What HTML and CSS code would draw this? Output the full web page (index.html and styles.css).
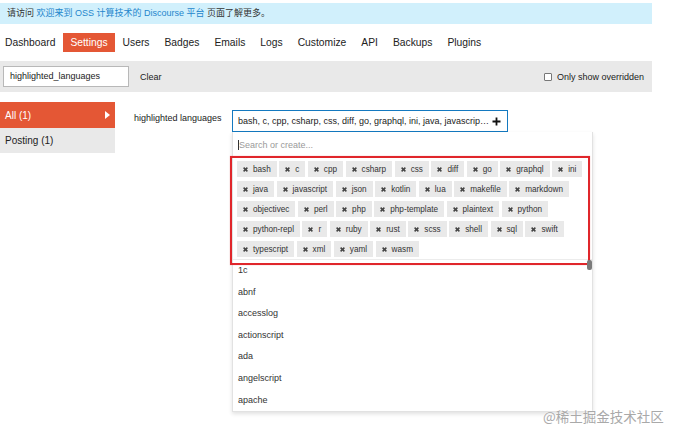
FILE: index.html
```html
<!DOCTYPE html>
<html lang="zh">
<head>
<meta charset="utf-8">
<title>Settings</title>
<link rel="stylesheet" href="styles.css">
</head>
<body>
<div class="page">
  <div class="banner">请访问 <a class="banner-link">欢迎来到 OSS 计算技术的 Discourse 平台</a> 页面了解更多。</div>

  <nav class="nav">
    <a class="nav-item first">Dashboard</a>
    <a class="nav-item active">Settings</a>
    <a class="nav-item">Users</a>
    <a class="nav-item">Badges</a>
    <a class="nav-item">Emails</a>
    <a class="nav-item">Logs</a>
    <a class="nav-item">Customize</a>
    <a class="nav-item">API</a>
    <a class="nav-item">Backups</a>
    <a class="nav-item">Plugins</a>
  </nav>

  <div class="filter">
    <div class="filter-input">highlighted_languages</div>
    <span class="clear">Clear</span>
    <label class="overridden"><span class="checkbox"></span>Only show overridden</label>
  </div>

  <div class="main">
    <aside class="sidebar">
      <div class="cat active">All (1)<span class="tri"></span></div>
      <div class="cat">Posting (1)</div>
    </aside>

    <section class="setting">
      <div class="setting-label">highlighted languages</div>
      <div class="control">
        <div class="select">
          <span class="select-text">bash, c, cpp, csharp, css, diff, go, graphql, ini, java, javascrip…</span>
          <svg class="plus" width="9" height="9" viewBox="0 0 9 9"><path d="M4.5 0.5v8M0.5 4.5h8" stroke="#111" stroke-width="1.8" fill="none"/></svg>
        </div>
        <div class="dropdown">
          <div class="search"><span class="caret"></span><span class="placeholder">Search or create...</span></div>
          <div class="chips">
            <span class="chip"><svg class="x" viewBox="0 0 5 5"><path d="M0.6 0.6L4.4 4.4M4.4 0.6L0.6 4.4"/></svg>bash</span>
            <span class="chip"><svg class="x" viewBox="0 0 5 5"><path d="M0.6 0.6L4.4 4.4M4.4 0.6L0.6 4.4"/></svg>c</span>
            <span class="chip"><svg class="x" viewBox="0 0 5 5"><path d="M0.6 0.6L4.4 4.4M4.4 0.6L0.6 4.4"/></svg>cpp</span>
            <span class="chip"><svg class="x" viewBox="0 0 5 5"><path d="M0.6 0.6L4.4 4.4M4.4 0.6L0.6 4.4"/></svg>csharp</span>
            <span class="chip"><svg class="x" viewBox="0 0 5 5"><path d="M0.6 0.6L4.4 4.4M4.4 0.6L0.6 4.4"/></svg>css</span>
            <span class="chip"><svg class="x" viewBox="0 0 5 5"><path d="M0.6 0.6L4.4 4.4M4.4 0.6L0.6 4.4"/></svg>diff</span>
            <span class="chip"><svg class="x" viewBox="0 0 5 5"><path d="M0.6 0.6L4.4 4.4M4.4 0.6L0.6 4.4"/></svg>go</span>
            <span class="chip"><svg class="x" viewBox="0 0 5 5"><path d="M0.6 0.6L4.4 4.4M4.4 0.6L0.6 4.4"/></svg>graphql</span>
            <span class="chip"><svg class="x" viewBox="0 0 5 5"><path d="M0.6 0.6L4.4 4.4M4.4 0.6L0.6 4.4"/></svg>ini</span>
            <span class="chip"><svg class="x" viewBox="0 0 5 5"><path d="M0.6 0.6L4.4 4.4M4.4 0.6L0.6 4.4"/></svg>java</span>
            <span class="chip"><svg class="x" viewBox="0 0 5 5"><path d="M0.6 0.6L4.4 4.4M4.4 0.6L0.6 4.4"/></svg>javascript</span>
            <span class="chip"><svg class="x" viewBox="0 0 5 5"><path d="M0.6 0.6L4.4 4.4M4.4 0.6L0.6 4.4"/></svg>json</span>
            <span class="chip"><svg class="x" viewBox="0 0 5 5"><path d="M0.6 0.6L4.4 4.4M4.4 0.6L0.6 4.4"/></svg>kotlin</span>
            <span class="chip"><svg class="x" viewBox="0 0 5 5"><path d="M0.6 0.6L4.4 4.4M4.4 0.6L0.6 4.4"/></svg>lua</span>
            <span class="chip"><svg class="x" viewBox="0 0 5 5"><path d="M0.6 0.6L4.4 4.4M4.4 0.6L0.6 4.4"/></svg>makefile</span>
            <span class="chip"><svg class="x" viewBox="0 0 5 5"><path d="M0.6 0.6L4.4 4.4M4.4 0.6L0.6 4.4"/></svg>markdown</span>
            <span class="chip"><svg class="x" viewBox="0 0 5 5"><path d="M0.6 0.6L4.4 4.4M4.4 0.6L0.6 4.4"/></svg>objectivec</span>
            <span class="chip"><svg class="x" viewBox="0 0 5 5"><path d="M0.6 0.6L4.4 4.4M4.4 0.6L0.6 4.4"/></svg>perl</span>
            <span class="chip"><svg class="x" viewBox="0 0 5 5"><path d="M0.6 0.6L4.4 4.4M4.4 0.6L0.6 4.4"/></svg>php</span>
            <span class="chip"><svg class="x" viewBox="0 0 5 5"><path d="M0.6 0.6L4.4 4.4M4.4 0.6L0.6 4.4"/></svg>php-template</span>
            <span class="chip"><svg class="x" viewBox="0 0 5 5"><path d="M0.6 0.6L4.4 4.4M4.4 0.6L0.6 4.4"/></svg>plaintext</span>
            <span class="chip"><svg class="x" viewBox="0 0 5 5"><path d="M0.6 0.6L4.4 4.4M4.4 0.6L0.6 4.4"/></svg>python</span>
            <span class="chip"><svg class="x" viewBox="0 0 5 5"><path d="M0.6 0.6L4.4 4.4M4.4 0.6L0.6 4.4"/></svg>python-repl</span>
            <span class="chip"><svg class="x" viewBox="0 0 5 5"><path d="M0.6 0.6L4.4 4.4M4.4 0.6L0.6 4.4"/></svg>r</span>
            <span class="chip"><svg class="x" viewBox="0 0 5 5"><path d="M0.6 0.6L4.4 4.4M4.4 0.6L0.6 4.4"/></svg>ruby</span>
            <span class="chip"><svg class="x" viewBox="0 0 5 5"><path d="M0.6 0.6L4.4 4.4M4.4 0.6L0.6 4.4"/></svg>rust</span>
            <span class="chip"><svg class="x" viewBox="0 0 5 5"><path d="M0.6 0.6L4.4 4.4M4.4 0.6L0.6 4.4"/></svg>scss</span>
            <span class="chip"><svg class="x" viewBox="0 0 5 5"><path d="M0.6 0.6L4.4 4.4M4.4 0.6L0.6 4.4"/></svg>shell</span>
            <span class="chip"><svg class="x" viewBox="0 0 5 5"><path d="M0.6 0.6L4.4 4.4M4.4 0.6L0.6 4.4"/></svg>sql</span>
            <span class="chip"><svg class="x" viewBox="0 0 5 5"><path d="M0.6 0.6L4.4 4.4M4.4 0.6L0.6 4.4"/></svg>swift</span>
            <span class="chip"><svg class="x" viewBox="0 0 5 5"><path d="M0.6 0.6L4.4 4.4M4.4 0.6L0.6 4.4"/></svg>typescript</span>
            <span class="chip"><svg class="x" viewBox="0 0 5 5"><path d="M0.6 0.6L4.4 4.4M4.4 0.6L0.6 4.4"/></svg>xml</span>
            <span class="chip"><svg class="x" viewBox="0 0 5 5"><path d="M0.6 0.6L4.4 4.4M4.4 0.6L0.6 4.4"/></svg>yaml</span>
            <span class="chip"><svg class="x" viewBox="0 0 5 5"><path d="M0.6 0.6L4.4 4.4M4.4 0.6L0.6 4.4"/></svg>wasm</span>
          </div>
          <ul class="options">
            <li>1c</li>
            <li>abnf</li>
            <li>accesslog</li>
            <li>actionscript</li>
            <li>ada</li>
            <li>angelscript</li>
            <li>apache</li>
          </ul>
          <div class="highlight"></div>
          <div class="thumb"></div>
        </div>
      </div>
    </section>
  </div>

  <div class="watermark">@稀土掘金技术社区</div>
</div>
</body>
</html>
```

FILE: styles.css
```css
* { box-sizing: border-box; }
html, body { margin: 0; padding: 0; background: #fff; }
body {
  font-family: "Liberation Sans", Arial, "Noto Sans CJK SC", sans-serif;
  color: #222;
  width: 690px;
  height: 437px;
  overflow: hidden;
}
.page { position: relative; width: 690px; height: 437px; }

.banner {
  margin-top: 3px;
  width: 652px;
  height: 21px;
  line-height: 21px;
  padding-left: 7px;
  background: #d1f0fc;
  font-family: "Liberation Sans", "Noto Sans CJK SC", sans-serif;
  font-size: 9px;
  color: #333;
}
.banner-link { color: #1f86cc; }

.nav {
  display: flex;
  margin-top: 9px;
  padding-left: 5px;
  height: 19px;
}
.nav-item {
  display: block;
  height: 19px;
  line-height: 19px;
  padding: 0 7px;
  margin-right: 1px;
  font-size: 10.3px;
  color: #222;
}
.nav-item.first { padding-left: 0; }
.nav-item.active { background: #e45735; color: #fff; }

.filter {
  display: flex;
  align-items: center;
  margin-top: 9px;
  width: 652px;
  height: 31px;
  padding: 0 8px 0 3px;
  background: #e9e9e9;
  font-size: 9px;
  color: #222;
}
.filter-input {
  width: 126px;
  height: 21px;
  line-height: 19px;
  padding-left: 6px;
  background: #fff;
  border: 1px solid #b8b8b8;
  font-size: 9px;
}
.clear { margin-left: 11px; }
.overridden {
  margin-left: auto;
  display: flex;
  align-items: center;
}
.checkbox {
  width: 8px;
  height: 8px;
  border: 1px solid #777;
  border-radius: 1px;
  background: #fff;
  margin-right: 5px;
}

.main {
  display: flex;
  margin-top: 10px;
}
.sidebar { width: 115px; flex: none; }
.cat {
  display: flex;
  align-items: center;
  height: 25px;
  padding-left: 5px;
  font-size: 10px;
  background: #e9e9e9;
  color: #222;
}
.cat.active {
  height: 26px;
  background: #e45735;
  color: #fff;
  padding-right: 5px;
}
.tri {
  margin-left: auto;
  width: 0;
  height: 0;
  border-top: 4.5px solid transparent;
  border-bottom: 4.5px solid transparent;
  border-left: 5px solid #fff;
}

.setting {
  display: flex;
  margin-top: 8px;
  padding-left: 19px;
}
.setting-label {
  width: 98px;
  font-size: 9px;
  line-height: 16px;
  color: #222;
}
.control { width: 361px; }
.select {
  display: flex;
  align-items: center;
  width: 276px;
  height: 22px;
  padding: 0 6px 0 5px;
  border: 1px solid #1479c0;
  font-size: 9px;
  color: #222;
  background: #fff;
}
.select-text { white-space: nowrap; overflow: hidden; }
.plus { margin-left: auto; flex: none; }

.dropdown {
  position: relative;
  width: 361px;
  height: 280px;
  border: 1px solid #e2e2e2;
  border-top: 0;
  background: #fff;
  box-shadow: 0 2px 4px rgba(0,0,0,0.12);
  overflow: visible;
}
.search {
  display: flex;
  align-items: center;
  height: 26px;
  padding-left: 5px;
  font-size: 9px;
}
.caret {
  width: 1px;
  height: 10px;
  background: #333;
}
.placeholder { color: #9a9a9a; }

.chips {
  display: flex;
  flex-wrap: wrap;
  align-content: flex-start;
  column-gap: 2.5px;
  row-gap: 4px;
  height: 102px;
  padding: 3px 4px 0 4px;
  border-bottom: 1px solid #ececec;
}
.chip {
  display: inline-flex;
  align-items: center;
  height: 16px;
  padding: 0 6px;
  background: #e9e9e9;
  font-size: 8.2px;
  color: #333;
}
.x {
  width: 5px;
  height: 5px;
  margin-right: 5px;
  fill: none;
  stroke: #444;
  stroke-width: 1.5;
  flex: none;
}

.options {
  list-style: none;
  margin: 0;
  padding: 0;
}
.options li {
  height: 21.6px;
  line-height: 21.6px;
  padding-left: 5px;
  font-size: 9px;
  color: #333;
}

.highlight {
  position: absolute;
  left: -3px;
  top: 24px;
  width: 360px;
  height: 109px;
  border: 2px solid #e0262b;
  box-shadow: 0 0 1px rgba(224,38,43,0.4);
}
.thumb {
  position: absolute;
  left: 354px;
  top: 128px;
  width: 5px;
  height: 10px;
  border-radius: 2px;
  background: #7a7a7a;
}

.watermark {
  position: absolute;
  left: 543px;
  top: 404px;
  font-family: "Noto Sans CJK SC", sans-serif;
  font-size: 13.5px;
  line-height: 18px;
  color: #a9a9a9;
  text-shadow: 0 0 2px #fff;
}
```
